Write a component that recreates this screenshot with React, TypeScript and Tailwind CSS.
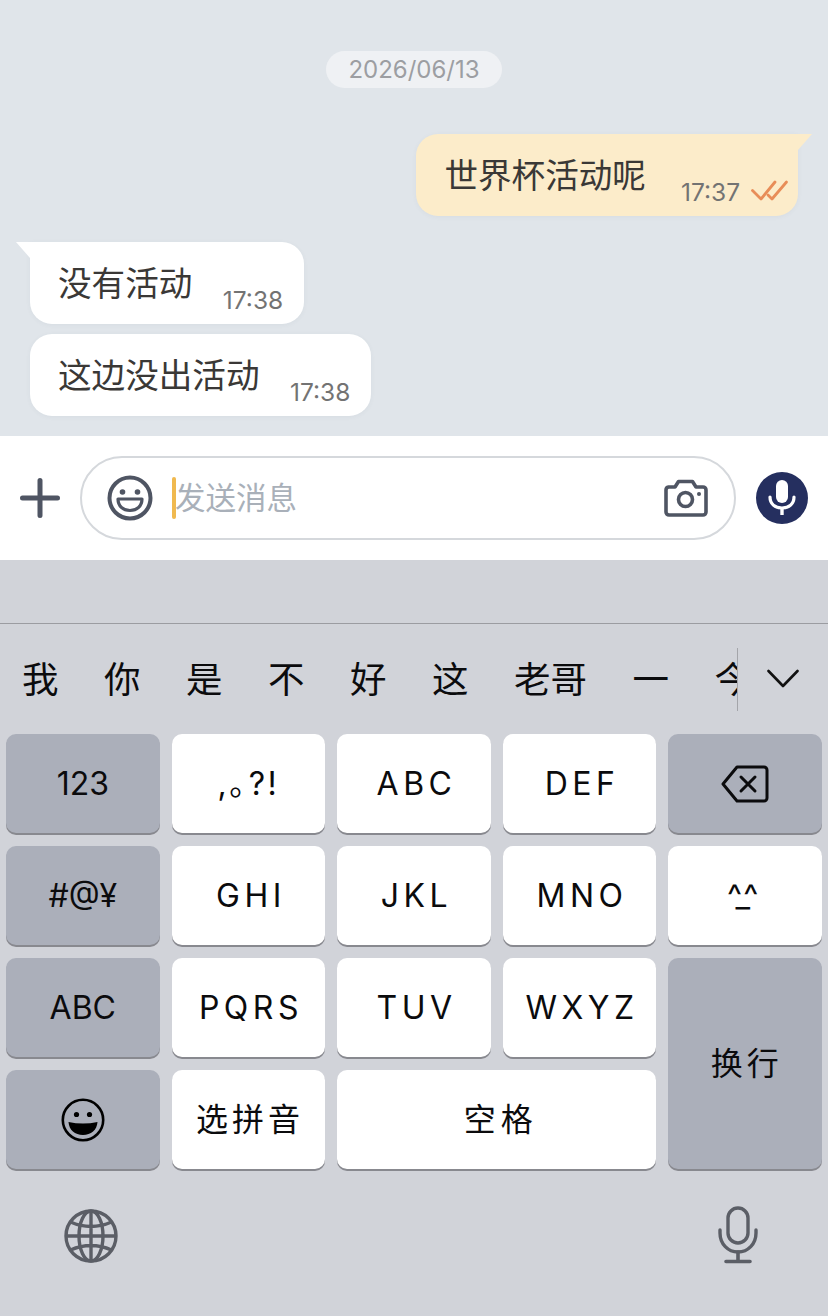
import React from 'react';

const cjk = "font-['Inter','Noto_Sans_CJK_SC',sans-serif]";

const Bubble: React.FC<{ text: string; time: string; mine?: boolean; tail?: boolean; className?: string }> = ({ text, time, mine, tail, className }) => (
    <div className={`relative flex h-[82px] rounded-[22px] shadow-[0_1px_5px_rgba(60,70,90,0.05)] ${mine ? 'self-end bg-[#fcecca] pl-[28px] pr-[9px]' : 'self-start bg-white pl-[28px] pr-[21px]'} ${tail && mine ? 'rounded-tr-none' : ''} ${tail && !mine ? 'rounded-tl-none' : ''} ${className || ''}`}>
        {tail && mine && (
            <svg className="absolute right-[-14px] top-0" width="14" height="16" viewBox="0 0 14 16"><path d="M0 0H14L0 16Z" fill="#fcecca" /></svg>
        )}
        {tail && !mine && (
            <svg className="absolute left-[-14px] top-0" width="14" height="16" viewBox="0 0 14 16"><path d="M14 0H0L14 16Z" fill="#ffffff" /></svg>
        )}
        <span className="mt-[18px] text-[33.6px] leading-[48px] text-[#3a3836]">{text}</span>
        <span className={`mt-[43px] text-[24.5px] leading-[30px] text-[#737373] ${mine ? 'ml-[35px]' : 'ml-[30.5px]'}`}>{time}</span>
        {mine && (
            <svg className="ml-[11px] mt-[45px]" width="38" height="24" viewBox="0 0 38 24" fill="none" stroke="#e88d58" strokeWidth="2.8" strokeLinecap="round" strokeLinejoin="round">
                <path d="M1.5 11.5 L10 20 L24 3" />
                <path d="M17 16 L21 20 L35.5 3" />
            </svg>
        )}
    </div>
);

const Key: React.FC<{ dark?: boolean; className?: string; children: React.ReactNode }> = ({ dark, className, children }) => (
    <div className={`flex items-center justify-center rounded-[10px] text-[32px] text-[#0b0b0d] shadow-[0_2px_0_#88898f] ${dark ? 'bg-[#abafba]' : 'bg-white'} ${className || ''}`}>
        {children}
    </div>
);

const SmileIcon = () => (
    <svg width="46" height="46" viewBox="0 0 46 46" fill="none">
        <circle cx="23" cy="23" r="20.5" stroke="#4f5563" strokeWidth="4" />
        <circle cx="15.5" cy="17" r="2.8" fill="#4f5563" />
        <circle cx="30.5" cy="17" r="2.8" fill="#4f5563" />
        <path d="M11 24 H35 C35 31 30 35.5 23 35.5 C16 35.5 11 31 11 24Z" stroke="#4f5563" strokeWidth="3.2" strokeLinejoin="round" />
    </svg>
);

const CameraIcon = () => (
    <svg width="44" height="38" viewBox="0 0 44 38" fill="none" stroke="#4f5563" strokeWidth="3.6" strokeLinejoin="round">
        <path d="M4.5 8 H11 L14.5 2.5 H28.5 L32 8 H39 A3 3 0 0 1 42 11 V33 A3 3 0 0 1 39 36 H5 A3 3 0 0 1 2 33 V11 A3 3 0 0 1 4.5 8Z" />
        <circle cx="21.5" cy="20.5" r="7" />
        <circle cx="35" cy="15" r="2" fill="#4f5563" stroke="none" />
    </svg>
);

const KeyEmoji = () => (
    <svg width="44" height="44" viewBox="0 0 44 44" fill="none">
        <circle cx="22" cy="22" r="20.2" stroke="#000" strokeWidth="2.6" />
        <circle cx="15.5" cy="16.5" r="2.6" fill="#000" />
        <circle cx="28.5" cy="16.5" r="2.6" fill="#000" />
        <path d="M7.5 24 Q22 27 36.5 24 C36 32 30 37 22 37 C14 37 8 32 7.5 24Z" fill="#000" />
    </svg>
);

const candidates = ['我', '你', '是', '不', '好', '这', '老哥', '一', '今'];

const App: React.FC = () => (
    <div className={`flex h-[1316px] w-[828px] flex-col overflow-hidden ${cjk}`}>
        <div className="flex h-[436px] flex-col bg-[#e0e5ea] pl-[30px] pr-[30px]">
            <div className="mt-[51px] flex h-[37px] w-[176px] items-center justify-center self-center rounded-full bg-[#eff1f4] text-[24px] text-[#9c9ea2]">2026/06/13</div>
            <Bubble mine tail text="世界杯活动呢" time="17:37" className="mt-[46px]" />
            <Bubble tail text="没有活动" time="17:38" className="mt-[26px]" />
            <Bubble text="这边没出活动" time="17:38" className="mt-[10px]" />
        </div>

        <div className="flex h-[124px] items-center bg-white pl-[20px]">
            <svg width="40" height="40" viewBox="0 0 40 40" fill="none" stroke="#4f5563" strokeWidth="5" strokeLinecap="round"><path d="M20 2.5V37.5M2.5 20H37.5" /></svg>
            <div className="ml-[20px] flex h-[84px] w-[656px] items-center rounded-full border-2 border-[#d5d8dc] pl-[25px]">
                <SmileIcon />
                <div className="ml-[19px] h-[42px] w-[4px] rounded-sm bg-[#f0b94f]" />
                <span className="-ml-[1px] text-[30.5px] text-[#a9b0b9]">发送消息</span>
                <div className="ml-auto mr-[26px]"><CameraIcon /></div>
            </div>
            <div className="ml-[20px] flex h-[52px] w-[52px] items-center justify-center rounded-full bg-[#252f5f]">
                <svg width="30" height="38" viewBox="0 0 30 38" fill="none">
                    <rect x="9" y="1" width="12" height="23" rx="6" fill="#fff" />
                    <path d="M3 18 C3 25 8 29 15 29 C22 29 27 25 27 18" stroke="#fff" strokeWidth="3.2" strokeLinecap="round" />
                    <path d="M15 29V36" stroke="#fff" strokeWidth="3.4" />
                </svg>
            </div>
        </div>

        <div className="flex flex-1 flex-col bg-[#d1d3d9]">
            <div className="h-[64px] border-b border-[#9b9ca1]" />
            <div className="flex h-[110px] items-center">
                <div className="flex h-[63px] w-[738px] items-center gap-[45.5px] overflow-hidden border-r border-[#a4a5aa] pl-[22px] pt-[2px] text-[36.5px] whitespace-nowrap text-[#0b0b0d]">
                    {candidates.map(c => <span key={c} className="shrink-0">{c}</span>)}
                </div>
                <svg className="ml-[29px]" width="32" height="20" viewBox="0 0 32 20" fill="none" stroke="#111" strokeWidth="2.6" strokeLinecap="round" strokeLinejoin="round"><path d="M1.5 2 L16 17 L30.5 2" /></svg>
            </div>
            <div className="grid grid-cols-5 grid-rows-[repeat(4,99px)] gap-x-[12px] gap-y-[13px] px-[6px]">
                <Key dark>123</Key>
                <Key className="text-[30px] tracking-[2.5px]">,<span className="-mr-[15px]">。</span>?!</Key>
                <Key className="pl-[5px] tracking-[4.5px]">ABC</Key>
                <Key className="pl-[5px] tracking-[4.5px]">DEF</Key>
                <Key dark>
                    <svg width="48" height="38" viewBox="0 0 48 38" fill="none" stroke="#0b0b0d" strokeWidth="3" strokeLinejoin="round" strokeLinecap="round">
                        <path d="M16 2 H43 A3 3 0 0 1 46 5 V33 A3 3 0 0 1 43 36 H16 L2 19Z" />
                        <path d="M20 12 L34 26 M34 12 L20 26" />
                    </svg>
                </Key>
                <Key dark>#@¥</Key>
                <Key className="pl-[5px] tracking-[4.5px]">GHI</Key>
                <Key className="pl-[5px] tracking-[4.5px]">JKL</Key>
                <Key className="pl-[5px] tracking-[4.5px]">MNO</Key>
                <Key className="pr-[4px] tracking-[1px]">^<span className="flex w-0 justify-center">_</span>^</Key>
                <Key dark>ABC</Key>
                <Key className="pl-[5px] tracking-[4.5px]">PQRS</Key>
                <Key className="pl-[5px] tracking-[4.5px]">TUV</Key>
                <Key className="pl-[5px] tracking-[4.5px]">WXYZ</Key>
                <Key dark className="row-span-2 pl-[3px] text-[31px] tracking-[4px]">换行</Key>
                <Key dark><KeyEmoji /></Key>
                <Key className="pl-[3px] text-[31px] tracking-[4px]">选拼音</Key>
                <Key className="col-span-2 pl-[8px] text-[30.5px] tracking-[5px]">空格</Key>
            </div>
            <div className="flex items-start justify-between pl-[64px] pr-[70px] pt-[40px]">
                <svg width="54" height="54" viewBox="0 0 54 54" fill="none" stroke="#5b5e66" strokeWidth="3.4">
                    <circle cx="27" cy="27" r="25" />
                    <ellipse cx="27" cy="27" rx="12" ry="25" />
                    <path d="M27 2V52M2 27H52M6.5 13 Q27 22 47.5 13 M6.5 41 Q27 32 47.5 41" />
                </svg>
                <svg className="-mt-[3px]" width="40" height="58" viewBox="0 0 40 58" fill="none" stroke="#5b5e66" strokeWidth="3.4" strokeLinecap="round">
                    <rect x="10" y="2" width="20" height="35" rx="10" />
                    <path d="M2 24 V27 C2 38 10 46 20 46 C30 46 38 38 38 27 V24" />
                    <path d="M20 46V55M8 55.5H32" strokeWidth="3.6" />
                </svg>
            </div>
        </div>
    </div>
);

export default App;
